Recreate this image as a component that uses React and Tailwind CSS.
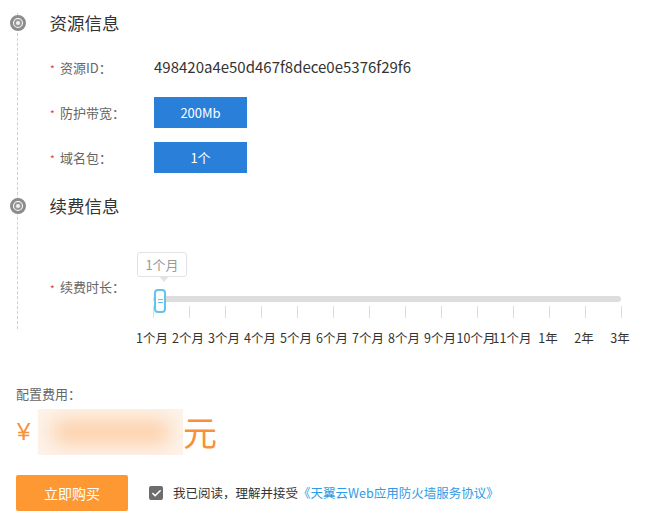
import { Check } from "lucide-react";

const marks = ["1个月", "2个月", "3个月", "4个月", "5个月", "6个月", "7个月", "8个月", "9个月", "10个月", "11个月", "1年", "2年", "3年"];

function Dot() {
  return (
    <div className="-ml-[8.5px] w-[16px] h-[16px] rounded-full border-[3px] border-[#8c8c8c] bg-white flex items-center justify-center shrink-0">
      <div className="w-[8px] h-[8px] rounded-full border-2 border-[#9a9a9a] bg-[#f2f2f2]" />
    </div>
  );
}

function Label({ children }) {
  return (
    <div className="w-[104px] flex items-center text-[13px] text-[#666] shrink-0">
      <span className="text-[#e4393c] text-[10px] w-[10px] mt-[2px]">*</span>
      <span>{children}</span>
    </div>
  );
}

export default function App() {
  return (
    <div
      className="w-[662px] h-[532px] bg-white pt-[13px] overflow-hidden"
      style={{ fontFamily: '"Noto Sans CJK SC", "Noto Sans", sans-serif' }}
    >
      <div className="ml-[17px] border-l border-dashed border-[#cfcfcf]">
        <div className="h-[20px] flex items-center">
          <Dot />
          <span className="ml-[24px] text-[17.5px] text-[#333]">资源信息</span>
        </div>

        <div className="pl-[32px] mt-[19px] h-[31px] flex items-center">
          <Label>资源ID：</Label>
          <span className="text-[15px] text-[#333]">498420a4e50d467f8dece0e5376f29f6</span>
        </div>
        <div className="pl-[32px] mt-[14px] h-[31px] flex items-center">
          <Label>防护带宽：</Label>
          <div className="w-[93px] h-[31px] bg-[#2a80d8] text-white text-[13px] flex items-center justify-center">200Mb</div>
        </div>
        <div className="pl-[32px] mt-[14px] h-[31px] flex items-center">
          <Label>域名包：</Label>
          <div className="w-[93px] h-[31px] bg-[#2a80d8] text-white text-[13px] flex items-center justify-center">1个</div>
        </div>

        <div className="mt-[23px] h-[20px] flex items-center">
          <Dot />
          <span className="ml-[24px] text-[17.5px] text-[#333]">续费信息</span>
        </div>

        <div className="pl-[32px] mt-[36px] flex items-start pb-[11px]">
          <div className="mt-[25px] h-[20px] w-[85px] flex">
            <Label>续费时长：</Label>
          </div>
          <div className="w-[504px]">
            <div className="relative ml-[2px] w-[50px] h-[25px] border border-[#e2e2e2] rounded-[3px] bg-white text-[13px] text-[#999] flex items-center justify-center">
              1个月
              <div className="absolute left-[21px] -bottom-[6px] w-0 h-0 border-l-[5px] border-r-[5px] border-t-[6px] border-l-transparent border-r-transparent border-t-[#e2e2e2]" />
            </div>
            <div className="relative mt-[19px] ml-[18px] w-[468px] h-[6px] rounded-full bg-[#dddddd]">
              <div className="absolute left-[1px] -top-[7px] w-[12px] h-[24px] rounded-[4px] border-2 border-[#62c3ee] bg-white flex flex-col items-center justify-center gap-[2px]">
                <div className="w-[5px] h-px bg-[#62c3ee]" />
                <div className="w-[5px] h-px bg-[#62c3ee]" />
              </div>
            </div>
            <div className="mt-[4px] flex">
              {marks.map((m) => (
                <div key={m} className="w-[36px] h-[12px] flex justify-center">
                  <div className="w-px h-full bg-[#dddddd]" />
                </div>
              ))}
            </div>
          </div>
        </div>
      </div>

      <div className="pl-[134px] flex">
        {marks.map((m) => (
          <div key={m} className="w-[36px] h-[17px] flex justify-center overflow-visible">
            <span className="whitespace-nowrap text-[12.5px] leading-[17px] text-[#333]">{m}</span>
          </div>
        ))}
      </div>

      <div className="pl-[16px] mt-[38px] h-[20px] flex items-center text-[13px] text-[#666]">配置费用：</div>

      <div className="pl-[17px] mt-[5px] h-[46px] flex items-center">
        <span className="w-[21px] text-[24px] leading-none text-[#f7923a]" style={{ fontFamily: '"Liberation Sans", sans-serif' }}>¥</span>
        <div className="w-[145px] h-[46px] bg-[#fdf3ea] overflow-hidden flex items-center justify-center">
          <div className="w-[120px] h-[24px] rounded-full bg-[#fdcea6] blur-[10px]" />
        </div>
        <span className="text-[34px] leading-none text-[#f7923a]">元</span>
      </div>

      <div className="pl-[16px] mt-[20px] flex items-center">
        <button className="w-[112px] h-[36px] rounded-[2px] bg-[#fe9833] text-white text-[14px]">立即购买</button>
        <div className="ml-[21px] w-[14px] h-[14px] rounded-[2px] bg-[#6d6d6d] flex items-center justify-center">
          <Check className="w-[11px] h-[11px] text-white" strokeWidth={3.5} />
        </div>
        <span className="ml-[10px] text-[12.5px] text-[#333]">我已阅读，理解并接受</span>
        <span className="text-[12.5px] text-[#2e9be4]">《天翼云Web应用防火墙服务协议》</span>
      </div>
    </div>
  );
}
